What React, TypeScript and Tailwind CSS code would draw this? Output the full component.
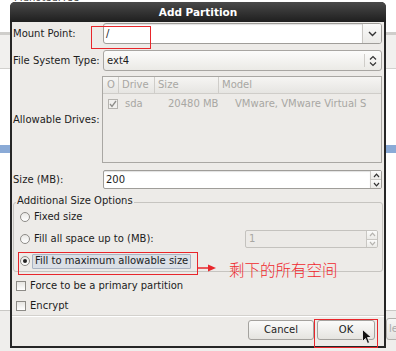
import React from "react";

const ChevronDown = () => (
  <svg width="9" height="6" viewBox="0 0 9 6"><path d="M1 1 L4.5 4.5 L8 1" fill="none" stroke="#333" strokeWidth="1.4" /></svg>
);
const UpDown = ({ color = "#333" }: { color?: string }) => (
  <svg width="8" height="12" viewBox="0 0 8 12">
    <path d="M1 4.5 L4 1.5 L7 4.5" fill="none" stroke={color} strokeWidth="1.2" />
    <path d="M1 7.5 L4 10.5 L7 7.5" fill="none" stroke={color} strokeWidth="1.2" />
  </svg>
);

const Spin = ({ color = "#333" }: { color?: string }) => (
  <div className="flex w-[11px] flex-col border-l border-[#c9c7c3]">
    <div className="flex flex-1 items-center justify-center border-b border-[#c9c7c3] bg-gradient-to-b from-[#fbfbfa] to-[#ebeae7]">
      <svg width="7" height="5" viewBox="0 0 7 5"><path d="M1 4 L3.5 1.2 L6 4" fill="none" stroke={color} strokeWidth="1.2" /></svg>
    </div>
    <div className="flex flex-1 items-center justify-center bg-gradient-to-b from-[#fbfbfa] to-[#ebeae7]">
      <svg width="7" height="5" viewBox="0 0 7 5"><path d="M1 1 L3.5 3.8 L6 1" fill="none" stroke={color} strokeWidth="1.2" /></svg>
    </div>
  </div>
);

const Radio = ({ checked = false }: { checked?: boolean }) => (
  <span className="flex h-[10px] w-[10px] shrink-0 items-center justify-center rounded-full border border-[#8d8b87] bg-gradient-to-b from-[#e9e8e5] to-[#ffffff]">
    {checked && <span className="h-[4px] w-[4px] rounded-full bg-[#222]" />}
  </span>
);

const Check = () => (
  <span className="h-[10px] w-[10px] shrink-0 border border-[#8d8b87] bg-gradient-to-b from-[#e6e5e2] to-[#ffffff]" />
);

export default function App() {
  return (
    <div className="relative h-[351px] w-[396px] overflow-hidden bg-white font-['DejaVu_Sans',sans-serif] text-[10px] leading-none text-[#1c1c1c]">
      {/* background application */}
      <div className="flex h-full flex-col">
        <div className="h-[32px] bg-white">
          <div className="ml-[14px] mt-[-7px] text-[10px] text-[#444]">MdnotedFree</div>
        </div>
        <div className="h-[3px] bg-[#cfcecb]" />
        <div className="h-[33px] bg-[#f1f0ee]" />
        <div className="h-[1px] bg-[#d2d1ce]" />
        <div className="h-[76px] bg-white" />
        <div className="h-[8px] bg-[#8aaad6]" />
        <div className="h-[157px] bg-white" />
        <div className="flex flex-1 justify-end border-t border-[#c9c8c5] bg-[#efeeec] pt-[7px]">
          <div className="mr-[-30px] flex h-[22px] w-[40px] items-center rounded-[3px] border border-[#b3b1ad] bg-gradient-to-b from-[#f7f7f6] to-[#e4e3e0] pl-[2px] text-[#aaa]">lete</div>
        </div>
      </div>

      {/* dialog window */}
      <div className="absolute left-[10px] top-[2px] flex h-[346px] w-[376px] flex-col rounded-t-[5px] bg-[#262626]">
        <div className="flex h-[20px] items-center justify-center rounded-t-[5px] bg-gradient-to-b from-[#4a4a4a] to-[#1f1f1f] text-[10.5px] font-bold text-white">
          Add Partition
        </div>
        <div className="relative mx-[2px] mb-[2px] flex flex-1 flex-col bg-[#edebe8] pl-[1px] pr-[2px]">
          {/* Mount Point */}
          <div className="mt-[1px] flex h-[21px] items-center">
            <div className="w-[90px]">Mount Point:</div>
            <div className="flex h-full flex-1 overflow-hidden rounded-[3px] border border-[#9f9d99] bg-white">
              <div className="flex flex-1 items-center pl-[2px] shadow-[inset_0_1px_1px_rgba(0,0,0,0.12)]">/</div>
              <div className="flex w-[19px] items-center justify-center border-l border-[#c9c7c3] bg-gradient-to-b from-[#fafaf9] to-[#ebeae7]">
                <ChevronDown />
              </div>
            </div>
          </div>
          {/* File System Type */}
          <div className="mt-[6px] flex h-[21px] items-center">
            <div className="w-[90px]">File System Type:</div>
            <div className="flex h-full flex-1 overflow-hidden rounded-[3px] border border-[#a8a6a2] bg-gradient-to-b from-[#fcfcfb] to-[#ebeae6]">
              <div className="flex flex-1 items-center pl-[3px]">ext4</div>
              <div className="my-[3px] w-[1px] bg-[#cfcdc9]" />
              <div className="flex w-[16px] items-center justify-center">
                <UpDown />
              </div>
            </div>
          </div>
          {/* Allowable Drives */}
          <div className="mt-[5px] flex h-[87px] items-center">
            <div className="w-[89px]">Allowable Drives:</div>
            <div className="flex h-full flex-1 flex-col border border-[#a9a7a3] bg-[#edebe8] text-[#a8a7a3]">
              <div className="flex h-[17px] items-center border-b border-[#cfcdc9] bg-gradient-to-b from-[#f6f5f3] to-[#e6e5e2]">
                <div className="w-[15px] pl-[4px]">O</div>
                <div className="flex h-full w-[36px] items-center border-l border-[#cfcdc9] pl-[3px]">Drive</div>
                <div className="flex h-full w-[64px] items-center border-l border-[#cfcdc9] pl-[3px]">Size</div>
                <div className="flex h-full flex-1 items-center border-l border-[#cfcdc9] pl-[3px]">Model</div>
              </div>
              <div className="mt-[4px] flex h-[12px] items-center">
                <div className="flex w-[16px] justify-start pl-[5px]">
                  <span className="flex h-[10px] w-[10px] items-center justify-center border border-[#b5b3af] bg-[#f1f0ee]">
                    <svg width="8" height="8" viewBox="0 0 8 8"><path d="M1 4 L3 6.5 L7 1" fill="none" stroke="#8e8d8a" strokeWidth="1.3" /></svg>
                  </span>
                </div>
                <div className="w-[49px] pl-[6px]">sda</div>
                <div className="w-[67px]">20480 MB</div>
                <div className="flex-1 whitespace-nowrap">VMware, VMware Virtual S</div>
              </div>
            </div>
          </div>
          {/* Size */}
          <div className="mt-[7px] flex h-[19px] items-center">
            <div className="w-[90px]">Size (MB):</div>
            <div className="flex h-full flex-1 overflow-hidden rounded-[2px] border border-[#9f9d99] bg-white">
              <div className="flex flex-1 items-center pl-[2px] shadow-[inset_0_1px_1px_rgba(0,0,0,0.12)]">200</div>
              <Spin />
            </div>
          </div>
          {/* Additional Size Options */}
          <div className="relative mr-[-1px] mt-[13px] flex h-[70px] flex-col rounded-[3px] border border-[#c6c4c0] pb-[1px] pt-[5px]">
            <div className="absolute left-[2px] top-[-7px] bg-[#edebe8] px-[1px]">Additional Size Options</div>
            <div className="flex h-[18px] items-center pl-[6px]">
              <Radio />
              <span className="ml-[4px]">Fixed size</span>
            </div>
            <div className="mt-[4px] flex h-[18px] items-center pl-[6px]">
              <Radio />
              <span className="ml-[4px]">Fill all space up to (MB):</span>
              <div className="ml-auto mr-[4px] flex h-[18px] w-[133px] overflow-hidden rounded-[2px] border border-[#c4c2be] bg-[#eceae7] text-[#a8a7a3]">
                <div className="flex flex-1 items-center pl-[3px]">1</div>
                <Spin color="#b5b3af" />
              </div>
            </div>
            <div className="mt-[4px] flex h-[18px] items-center pl-[6px]">
              <Radio checked />
              <span className="ml-[2px] flex h-[15px] items-center rounded-[1px] border border-[#a9b3c2] bg-[#dadfe6] px-[2px]">Fill to maximum allowable size</span>
            </div>
            {/* annotations */}
            <div className="absolute left-[4px] top-[49px] h-[23px] w-[180px] border-[1.5px] border-[#e8262b]" />
            <svg className="absolute left-[183px] top-[60px]" width="20" height="10" viewBox="0 0 20 10">
              <path d="M0 5 L13 5" stroke="#e8262b" strokeWidth="1.5" />
              <path d="M11 1.5 L19 5 L11 8.5 Z" fill="#e8262b" />
            </svg>
            <div className="absolute left-[215px] top-[59px] whitespace-nowrap font-['Noto_Sans_CJK_SC',sans-serif] text-[15.5px] font-light text-[#f0292e]">剩下的所有空间</div>
          </div>
          {/* Checkboxes */}
          <div className="mt-[6px] flex h-[16px] items-center pl-[3px]">
            <Check />
            <span className="ml-[4px]">Force to be a primary partition</span>
          </div>
          <div className="mt-[4px] flex h-[16px] items-center pl-[3px]">
            <Check />
            <span className="ml-[4px]">Encrypt</span>
          </div>
          <div className="ml-[-1px] mr-[-2px] mt-[1px] h-[1px] bg-[#d3d1cd]" />
          <div className="ml-[-1px] mr-[-2px] h-[1px] bg-white" />
          {/* Buttons */}
          <div className="mr-[7px] mt-[3px] flex justify-end gap-[3px]">
            <div className="flex h-[20px] w-[66px] items-center justify-center rounded-[3px] border border-[#a4a29e] bg-gradient-to-b from-[#fbfbfa] to-[#e5e4e0]">Cancel</div>
            <div className="flex h-[20px] w-[58px] items-center justify-center rounded-[3px] border border-[#a4a29e] bg-gradient-to-b from-[#fbfbfa] to-[#e5e4e0]">OK</div>
          </div>
          {/* annotations */}
          <div className="absolute left-[79px] top-[4px] h-[23px] w-[60px] border-[1.5px] border-[#e8262b]" />
          <div className="absolute left-[302px] top-[297px] h-[29px] w-[64px] border-[1.5px] border-[#e8262b]" />
          <svg className="absolute left-[350px] top-[307px]" width="10" height="16" viewBox="0 0 10 16">
            <path d="M0.5 0.5 L0.5 12.5 L3.5 9.5 L5.5 14.5 L7.5 13.5 L5.5 8.5 L9.5 8.5 Z" fill="#111" stroke="#fff" strokeWidth="0.8" />
          </svg>
        </div>
      </div>
    </div>
  );
}
